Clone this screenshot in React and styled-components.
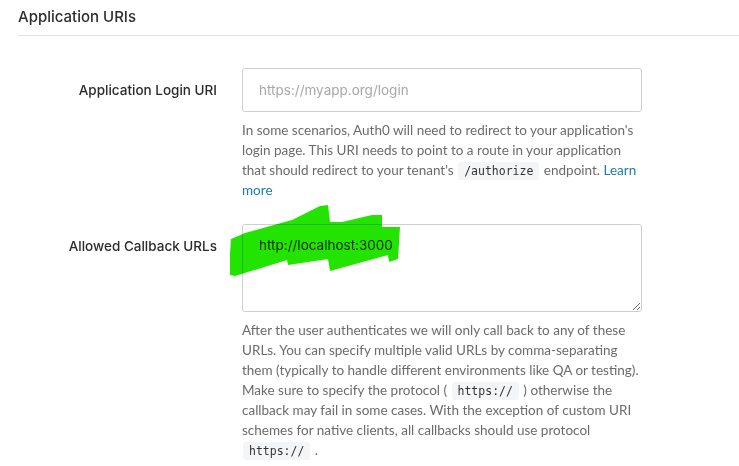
import React from 'react'
import styled, { createGlobalStyle } from 'styled-components'

const GlobalStyle = createGlobalStyle`
  body {
    margin: 0;
    background: #fff;
    font-family: Inter, "Noto Sans", sans-serif;
    color: #2d2d2d;
  }
`

const Section = styled.div`
  position: relative;
  padding: 8px 0 0 18px;
`

const SectionTitle = styled.h2`
  margin: 0;
  font-size: 15px;
  font-weight: 500;
  line-height: 18px;
  padding-bottom: 9px;
  border-bottom: 1px solid #e3e3e3;
`

const Form = styled.div`
  display: flex;
  flex-direction: column;
  gap: 24px;
  padding-top: 32px;
`

const Row = styled.div`
  display: grid;
  grid-template-columns: 199px 400px;
  column-gap: 25px;
  align-items: start;
`

const Label = styled.label`
  text-align: right;
  font-size: 13.5px;
  font-weight: 500;
  line-height: 20px;
  padding-top: 12px;
  color: #2b2b2b;
`

const Field = styled.div`
  display: flex;
  flex-direction: column;
  gap: 8px;
`

const Input = styled.input`
  box-sizing: border-box;
  width: 100%;
  height: 44px;
  padding: 0 16px;
  border: 1px solid #cfcfcf;
  border-radius: 3px;
  font: inherit;
  font-size: 13.5px;
  color: #333;
  outline: none;

  &::placeholder {
    color: #a8a8a8;
  }
`

const TextArea = styled.textarea`
  box-sizing: border-box;
  width: 100%;
  height: 88px;
  padding: 9px 16px;
  border: 1px solid #cfcfcf;
  border-radius: 3px;
  font: inherit;
  font-size: 13.5px;
  line-height: 22px;
  color: #333;
  outline: none;
`

const Help = styled.p`
  margin: 0;
  font-family: Lato, Inter, sans-serif;
  font-size: 13.5px;
  line-height: 20px;
  color: #6b6b6b;
`

const Code = styled.code`
  display: inline-block;
  font-family: "DejaVu Sans Mono", "Liberation Mono", monospace;
  font-size: 11.5px;
  line-height: 18px;
  color: #333;
  background: #f4f5f7;
  border-radius: 3px;
  padding: 0 6px;
  margin: 0 1px;
`

const HelpLink = styled.a`
  color: #1a7bb0;
  text-decoration: none;
`

const Scribble = styled.svg`
  position: absolute;
  left: 228px;
  top: 203px;
  pointer-events: none;
  mix-blend-mode: multiply;
`

export default function App() {
  return (
    <>
      <GlobalStyle />
      <Section>
        <SectionTitle>Application URIs</SectionTitle>
        <Form>
          <Row>
            <Label>Application Login URI</Label>
            <Field>
              <Input placeholder="https://myapp.org/login" />
              <Help>
                In some scenarios, Auth0 will need to redirect to your application's login page.
                This URI needs to point to a route in your application that should redirect to
                your tenant's <Code>/authorize</Code> endpoint.{' '}
                <HelpLink href="#">Learn more</HelpLink>
              </Help>
            </Field>
          </Row>
          <Row>
            <Label>Allowed Callback URLs</Label>
            <Field>
              <TextArea defaultValue="http://localhost:3000" spellCheck={false} />
              <Help>
                After the user authenticates we will only call back to any of these URLs. You can
                specify multiple valid URLs by comma-separating them (typically to handle different
                environments like QA or testing). Make sure to specify the protocol ({' '}
                <Code>https://</Code> ) otherwise the callback may fail in some cases. With the
                exception of custom URI schemes for native clients, all callbacks should use
                protocol <Code>https://</Code> .
              </Help>
            </Field>
          </Row>
        </Form>
        <Scribble width="176" height="76" viewBox="228 203 176 76">
          <polygon
            fill="#22e400"
            points="231,239 245,233 292,220 320,206 328,205 330,222 342,222 372,215 382,215 382,227 400,227 398,259 389,262 388,255 330,271 328,259 288,265 287,260 235,276 230,275 230,253"
          />
        </Scribble>
      </Section>
    </>
  )
}
